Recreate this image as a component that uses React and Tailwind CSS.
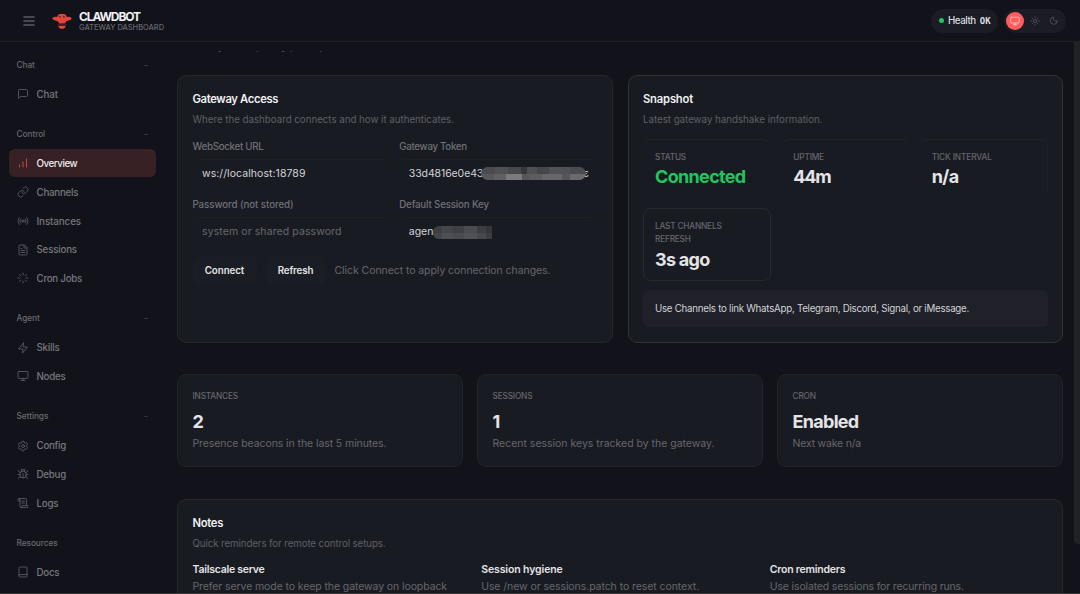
import { useState } from 'react';
import clsx from 'clsx';
import { Link, Radio, FileText, Loader, Monitor, Settings, Bug, ScrollText, Book, Sun, Moon } from 'lucide-react';

const svgProps = {
  viewBox: '0 0 24 24',
  fill: 'none',
  stroke: 'currentColor',
  strokeWidth: 1.5,
  strokeLinecap: 'round',
  strokeLinejoin: 'round',
};

const ChatIcon = ({ className }) => (
  <svg {...svgProps} className={className}>
    <path d="M21 15a2 2 0 0 1-2 2H7l-4 4V5a2 2 0 0 1 2-2h14a2 2 0 0 1 2 2z" />
  </svg>
);

const BarsIcon = ({ className }) => (
  <svg {...svgProps} strokeWidth={2} className={className}>
    <path d="M5 20v-4M12 20V10M19 20V4" />
  </svg>
);

const ZapIcon = ({ className }) => (
  <svg {...svgProps} className={className}>
    <polygon points="13 2 3 14 12 14 11 22 21 10 12 10 13 2" />
  </svg>
);

const groups = [
  { label: 'Chat', items: [{ name: 'Chat', icon: ChatIcon }] },
  {
    label: 'Control',
    items: [
      { name: 'Overview', icon: BarsIcon, tracking: 'tracking-[-0.45px]' },
      { name: 'Channels', icon: Link, tracking: 'tracking-[-0.26px]' },
      { name: 'Instances', icon: Radio, tracking: 'tracking-[-0.07px]' },
      { name: 'Sessions', icon: FileText, tracking: 'tracking-[-0.2px]' },
      { name: 'Cron Jobs', icon: Loader, tracking: 'tracking-[-0.26px]' },
    ],
  },
  { label: 'Agent', items: [{ name: 'Skills', icon: ZapIcon, tracking: 'tracking-[-0.2px]' }, { name: 'Nodes', icon: Monitor, tracking: 'tracking-[-0.25px]' }] },
  {
    label: 'Settings',
    items: [
      { name: 'Config', icon: Settings, tracking: 'tracking-[-0.27px]' },
      { name: 'Debug', icon: Bug, tracking: 'tracking-[-0.25px]' },
      { name: 'Logs', icon: ScrollText, tracking: 'tracking-[-0.2px]' },
    ],
  },
  { label: 'Resources', fixed: true, items: [{ name: 'Docs', icon: Book, tracking: 'tracking-[-0.25px]' }] },
];

const summary = [
  { label: 'Instances', value: '2', note: 'Presence beacons in the last 5 minutes.', tracking: 'tracking-[-0.087px]' },
  { label: 'Sessions', value: '1', note: 'Recent session keys tracked by the gateway.', tracking: 'tracking-[-0.012px]' },
  { label: 'Cron', value: 'Enabled', note: 'Next wake n/a', tracking: 'tracking-[-0.2px]' },
];

const notes = [
  { title: 'Tailscale serve', text: 'Prefer serve mode to keep the gateway on loopback', titleTracking: 'tracking-[-0.25px]', tracking: 'tracking-[-0.096px]' },
  { title: 'Session hygiene', text: 'Use /new or sessions.patch to reset context.', titleTracking: 'tracking-[-0.11px]', tracking: 'tracking-[-0.07px]' },
  { title: 'Cron reminders', text: 'Use isolated sessions for recurring runs.', titleTracking: 'tracking-[-0.22px]', tracking: 'tracking-[-0.16px]' },
];

function Logo() {
  return (
    <svg viewBox="0 0 20 20" className="h-5 w-5 shrink-0">
      <g fill="#e5443b">
        <path d="M7.500 3h5q2.200 1 2.200 3 3-.7 5 1.200-.4 1.900-2.600 2.100-1.600.9-2.900.9l-1.400 2.400H7.200L5.800 10.200q-1.300 0-2.900-.9Q.7 9 .3 7.200q2-1.900 5-1.200Q5.300 4 7.500 3z" />
        <path d="M6 14.800h8l-1.200 2-1 .9H8.200l-1-.9z" />
      </g>
      <path d="M5.500 13.300h9" stroke="#5e211f" strokeWidth="0.9" />
      <circle cx="8.100" cy="5.600" r="0.9" fill="#3b1a24" />
      <circle cx="12" cy="5.600" r="0.9" fill="#3b1a24" />
      <circle cx="8.200" cy="5.400" r="0.35" fill="#7fb3b8" />
      <circle cx="12.100" cy="5.400" r="0.35" fill="#7fb3b8" />
    </svg>
  );
}

function Header() {
  return (
    <header className="flex h-[42px] shrink-0 items-center border-b border-[#1f2126] pl-[22.500px] pr-[14px]">
      <svg viewBox="0 0 12 10" className="h-[10px] w-3 text-[#7d7e83]" stroke="currentColor" strokeWidth="1.200" strokeLinecap="round">
        <path d="M.8 1h10.400M.8 5h10.400M.8 9h10.400" />
      </svg>
      <div className="ml-[17px] flex items-center gap-[7.500px]">
        <Logo />
        <div className="pt-px">
          <div className="text-[12px] leading-[13px] font-bold tracking-[-1.100px] text-[#f1f1f3]">CLAWDBOT</div>
          <div className="text-[7.500px] leading-[9px] font-medium tracking-[-0.02px] text-[#66676c]">GATEWAY DASHBOARD</div>
        </div>
      </div>
      <div className="ml-auto flex items-center gap-1.5">
        <div className="flex h-6 w-[67px] items-center rounded-full bg-[#1b1c24] pl-[7.500px]">
          <span className="h-[5px] w-[5px] rounded-full bg-[#22c55e]" />
          <span className="ml-[4.500px] pt-[1.500px] text-[9.750px] font-medium tracking-[-0.45px] text-[#dcdce0]">Health</span>
          <span className="ml-[4px] pt-[1.500px] font-['DejaVu_Sans_Mono',monospace] text-[9px] font-bold text-[#dcdce0]">OK</span>
        </div>
        <div className="flex h-6 items-center gap-[1.500px] rounded-full bg-[#1b1c24] pl-0.5 pr-[3px] text-[#5d5e64]">
          <span className="flex h-[18px] w-[18px] items-center justify-center rounded-full bg-[#ff5c5c] text-[#ffd2d0]">
            <Monitor size={10} strokeWidth={1.800} />
          </span>
          <span className="flex h-[18px] w-[18px] items-center justify-center">
            <Sun size={10} strokeWidth={1.800} />
          </span>
          <span className="flex h-[18px] w-[18px] items-center justify-center">
            <Moon size={9.500} strokeWidth={1.800} />
          </span>
        </div>
      </div>
    </header>
  );
}

function Sidebar({ active, onSelect }) {
  return (
    <nav className="flex w-[165px] shrink-0 flex-col gap-[17.250px] overflow-hidden pl-[9px] pr-[9px] pt-[14px]">
      {groups.map((group) => (
        <div key={group.label}>
          <div className="flex h-[18px] items-center justify-between pl-[7.500px] pr-2 text-[8.250px] font-medium tracking-[-0.04px] text-[#6a6b70]">
            <span>{group.label}</span>
            {!group.fixed && <span className="h-px w-1 bg-[#303136]" />}
          </div>
          <div className="mt-1.5 flex flex-col gap-[0.750px]">
            {group.items.map(({ name, icon: Icon, tracking }) => (
              <button
                key={name}
                onClick={() => onSelect(name)}
                className={clsx(
                  'flex h-7 shrink-0 items-center gap-[7.500px] rounded-md pl-2 text-left text-[9.750px] font-medium',
                  tracking || 'tracking-[-0.1px]',
                  active === name && group.label !== 'Chat' ? 'bg-[#382125] text-[#ececef]' : 'text-[#77787d]'
                )}
              >
                <Icon strokeWidth={1.500} className={clsx('h-3 w-3 shrink-0', active === name ? 'text-[#c9423f]' : 'text-[#66676d]')} />
                <span className="pt-[0.500px] leading-[15px]">{name}</span>
              </button>
            ))}
          </div>
        </div>
      ))}
    </nav>
  );
}

function Card({ className, children }) {
  return <section className={clsx('rounded-[9px] border bg-[#191b22] px-[14.500px]', className)}>{children}</section>;
}

function Field({ label, tracking, children }) {
  return (
    <div className="min-w-0">
      <div className={clsx('h-[13px] text-[9.750px] leading-[13px] font-medium text-[#6f7076]', tracking)}>{label}</div>
      <div className="mt-1.5 flex h-7 items-center rounded-md border-t border-[#22231f]/80 pl-[9.500px] text-[10.500px] whitespace-nowrap text-[#d3d3d8]">
        {children}
      </div>
    </div>
  );
}

function Redacted({ tones, className }) {
  return (
    <span className={clsx('flex shrink-0 flex-wrap overflow-hidden', className)}>
      {tones.map((tone, i) => (
        <span key={i} className={clsx('h-1/2', tone)} />
      ))}
    </span>
  );
}

const tokenTones = [
  'w-[13%] bg-[#4b4c52]', 'w-[12%] bg-[#505156]', 'w-[13%] bg-[#47484e]', 'w-[6%] bg-[#36373d]', 'w-[9%] bg-[#4f5055]', 'w-[12%] bg-[#45464c]', 'w-[20%] bg-[#515257]', 'w-[15%] bg-[#4b4c52]',
  'w-[12%] bg-[#56575c]', 'w-[12%] bg-[#606165]', 'w-[15%] bg-[#7a7b7f]', 'w-[6%] bg-[#55565a]', 'w-[13%] bg-[#5c5d61]', 'w-[19%] bg-[#66676b]', 'w-[8%] bg-[#55565b]', 'w-[15%] bg-[#6a6b6f]',
];

const keyTones = [
  'w-[14%] bg-[#3e3f45]', 'w-[20%] bg-[#45464c]', 'w-[18%] bg-[#3f4046]', 'w-[22%] bg-[#4b4c51]', 'w-[15%] bg-[#3c3d43]', 'w-[11%] bg-[#34353b]',
  'w-[14%] bg-[#45464c]', 'w-[20%] bg-[#4e4f54]', 'w-[18%] bg-[#494a4f]', 'w-[22%] bg-[#515257]', 'w-[15%] bg-[#48494e]', 'w-[11%] bg-[#3c3d43]',
];

function GatewayAccess() {
  return (
    <Card className="border-[#23262a] pt-[15px]">
      <h2 className="text-[11.250px] leading-4 font-semibold tracking-[-0.35px] text-[#f0f0f2]">Gateway Access</h2>
      <p className="mt-[5.500px] text-[9.750px] leading-[14px] tracking-[-0.027px] text-[#5f6066]">
        Where the dashboard connects and how it authenticates.
      </p>
      <div className="mt-[13.500px] grid grid-cols-2 gap-x-[9px] gap-y-[11px]">
        <Field label="WebSocket URL" tracking="tracking-[-0.29px]">
          <span className="tracking-[0.066px]">ws://localhost:18789</span>
        </Field>
        <Field label="Gateway Token" tracking="tracking-[-0.31px]">
          <span className="tracking-[-0.09px]">33d4816e0e43</span>
          <Redacted tones={tokenTones} className="relative -ml-0.5 h-[13px] w-[105px] rounded-full" />
          <span className="-ml-[3px]">ε</span>
        </Field>
        <Field label="Password (not stored)" tracking="tracking-[-0.09px]">
          <span className="tracking-[0.094px] text-[#66676c]">system or shared password</span>
        </Field>
        <Field label="Default Session Key" tracking="tracking-[-0.18px]">
          <span>agen</span>
          <Redacted tones={keyTones} className="mt-0.5 h-[13px] w-[59px] rounded-l-md" />
        </Field>
      </div>
      <div className="mt-[11px] flex items-center gap-[9px]">
        <button className="h-[29px] w-16 rounded-md bg-[#1a1d23] pt-[2px] text-[9.750px] font-semibold tracking-[-0.06px] text-[#e4e4e7]">Connect</button>
        <button className="h-[29px] w-[60px] rounded-md bg-[#1a1d23] pt-[2px] text-[9.750px] font-semibold tracking-[-0.15px] text-[#e4e4e7]">Refresh</button>
        <span className="pt-px text-[10.500px] tracking-[-0.067px] whitespace-nowrap text-[#66676c]">Click Connect to apply connection changes.</span>
      </div>
    </Card>
  );
}

function Stat({ label, value, className, labelClass, valueClass }) {
  return (
    <div className={clsx('rounded-lg border px-[11px] pt-[10.500px] pb-[10.500px]', className)}>
      <div className={clsx('text-[8.250px] leading-[12.750px] font-medium text-[#66676c] uppercase', labelClass)}>{label}</div>
      <div className={clsx('mt-1 text-[18px] leading-5 font-bold', valueClass)}>{value}</div>
    </div>
  );
}

function Snapshot() {
  return (
    <Card className="border-[#303236] pt-[15px]">
      <h2 className="text-[11.250px] leading-4 font-semibold tracking-[-0.2px] text-[#f0f0f2]">Snapshot</h2>
      <p className="mt-[5.500px] text-[9.750px] leading-[14px] tracking-[-0.026px] text-[#5f6066]">Latest gateway handshake information.</p>
      <div className="mt-[12.500px] grid grid-cols-3 gap-x-[10.500px] gap-y-[9.500px]">
        <Stat
          label="Status"
          value="Connected"
          className="border-x-transparent border-t-[#212429] border-b-transparent"
          labelClass="tracking-[-0.16px]"
          valueClass="tracking-[-0.67px] text-[#22c55e]"
        />
        <Stat
          label="Uptime"
          value="44m"
          className="border-x-transparent border-t-[#212429] border-b-transparent"
          labelClass="tracking-[-0.16px]"
          valueClass="tracking-[-1.250px] text-[#e4e4e7]"
        />
        <Stat
          label="Tick Interval"
          value="n/a"
          className="border-l-transparent border-t-[#212429] border-r-[#1e2026] border-b-transparent"
          labelClass="tracking-[-0.1px]"
          valueClass="tracking-[-0.55px] text-[#e4e4e7]"
        />
        <Stat
          label={<>Last Channels<br />Refresh</>}
          value="3s ago"
          className="border-[#26292d]"
          labelClass="tracking-[-0.18px]"
          valueClass="pt-[0.750px] -mb-[0.750px] tracking-[-0.72px] text-[#e4e4e7]"
        />
      </div>
      <div className="mt-[9px] flex h-[37.500px] items-center rounded-md bg-[#1f2028] pt-[2px] pl-3 text-[9.750px] tracking-[-0.268px] text-[#d3d3d8]">
        Use Channels to link WhatsApp, Telegram, Discord, Signal, or iMessage.
      </div>
    </Card>
  );
}

export default function App() {
  const [active, setActive] = useState('Overview');

  return (
    <div className="flex h-[594px] w-[1080px] flex-col overflow-hidden border-b border-[#343539] bg-[#11121a] font-['Inter',sans-serif]">
      <Header />
      <div className="flex min-h-0 flex-1">
        <Sidebar active={active} onSelect={setActive} />

        <main className="flex min-w-0 flex-1 flex-col overflow-hidden pl-3 pr-[11px]">
          {/* Page subtitle, scrolled under the header */}
          <div className="mt-[9px] flex h-px shrink-0 items-end overflow-hidden pl-[4px]">
            <p className="text-[10.500px] leading-[11px] tracking-[-0.1px] whitespace-nowrap text-[#5a5b60]">
              Gateway status, entry points, and a fast health read.
            </p>
          </div>

          <div className="mt-[23px] grid h-[268px] shrink-0 grid-cols-2 gap-[15px]">
            <GatewayAccess />
            <Snapshot />
          </div>

          <div className="mt-[31px] grid h-[93px] shrink-0 grid-cols-3 gap-[14px]">
            {summary.map((item) => (
              <Card key={item.label} className="border-[#202327] pt-[14.500px]">
                <div className="text-[8.250px] leading-[13px] font-medium tracking-[-0.16px] text-[#66676c] uppercase">{item.label}</div>
                <div className="mt-[7px] text-[18px] leading-6 font-bold tracking-[-0.7px] text-[#e4e4e7]">{item.value}</div>
                <p className={clsx('mt-[2px] text-[10.500px] leading-[15px] whitespace-nowrap text-[#66676c]', item.tracking)}>{item.note}</p>
              </Card>
            ))}
          </div>

          <Card className="mt-8 h-[150px] shrink-0 border-[#25282b] pt-[15px]">
            <h2 className="text-[11.250px] leading-4 font-semibold tracking-[-0.3px] text-[#f0f0f2]">Notes</h2>
            <p className="mt-[5.500px] text-[9.750px] leading-[14px] tracking-[-0.108px] text-[#5f6066]">Quick reminders for remote control setups.</p>
            <div className="mt-[11px] grid grid-cols-3 gap-[11px]">
              {notes.map((note) => (
                <div key={note.title} className="text-[10.500px] whitespace-nowrap">
                  <div className={clsx('leading-4 font-semibold text-[#e4e4e7]', note.titleTracking)}>{note.title}</div>
                  <div className={clsx('leading-[17px] text-[#66676c]', note.tracking)}>{note.text}</div>
                </div>
              ))}
            </div>
          </Card>
        </main>

        {/* Scroll thumb */}
        <div className="h-[502px] w-[6px] shrink-0 rounded-bl bg-[#212226]" />
      </div>
    </div>
  );
}
